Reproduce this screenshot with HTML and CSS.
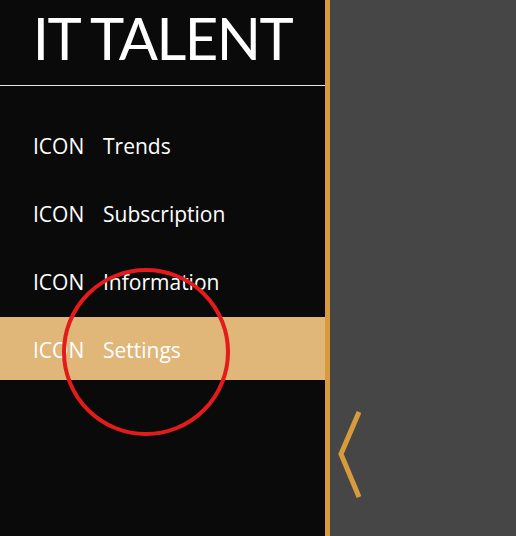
FILE: index.html
```html
<!DOCTYPE html>
<html>
<head>
<meta charset="utf-8">
<link rel="stylesheet" href="styles.css">
</head>
<body>
<div class="app">
  <aside class="sidebar">
    <div class="brand">IT TALENT</div>
    <nav class="menu">
      <div class="item"><span class="icon">ICON</span><span class="label">Trends</span></div>
      <div class="item"><span class="icon">ICON</span><span class="label">Subscription</span></div>
      <div class="item"><span class="icon">ICON</span><span class="label">Information</span></div>
      <div class="item active"><span class="icon">ICON</span><span class="label">Settings</span></div>
    </nav>
    <div class="ring"></div>
  </aside>
  <main class="content">
    <svg class="chevron" width="30" height="92" viewBox="0 0 30 92">
      <polyline points="28,3 10,45 28,88" fill="none" stroke="#d89b3c" stroke-width="5"/>
    </svg>
  </main>
</div>
</body>
</html>
```
FILE: styles.css
```css
html, body { margin: 0; padding: 0; }
body { background: #464646; font-family: "Open Sans", sans-serif; }
.app { display: flex; width: 516px; height: 536px; overflow: hidden; }
.sidebar {
  position: relative;
  width: 325px;
  flex: none;
  background: #0a0a0a;
  border-right: 5px solid #d89b3c;
}
.brand {
  height: 85px;
  border-bottom: 1px solid #e6e6e6;
  color: #fff;
  font-family: "Lato", sans-serif;
  font-weight: 400;
  font-size: 58px;
  line-height: 76px;
  text-align: center;
  letter-spacing: -1.5px;
}
.menu { display: flex; flex-direction: column; gap: 5px; padding-top: 27px; }
.item {
  height: 63px;
  display: flex;
  align-items: center;
  padding-left: 33px;
  padding-top: 3px;
  box-sizing: border-box;
  color: #fff;
  font-size: 21px;
}
.item.active { background: #e0b679; }
.icon { width: 70px; }
.ring {
  position: absolute;
  left: 62px; top: 268px;
  width: 160px; height: 160px;
  border: 4px solid #e41b1b;
  border-radius: 50%;
}
.content { flex: 1; position: relative; }
.chevron { position: absolute; left: 1px; top: 409px; }
```
